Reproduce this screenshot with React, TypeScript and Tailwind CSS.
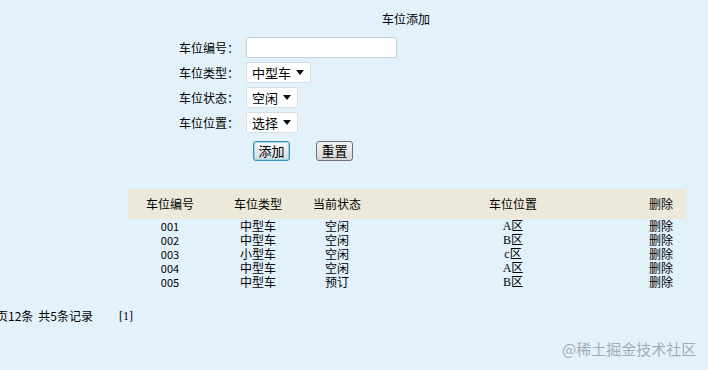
import React from "react"

type Space = { no: string; kind: string; state: string; place: string }

const spaces: Space[] = [
  { no: "001", kind: "中型车", state: "空闲", place: "A区" },
  { no: "002", kind: "中型车", state: "空闲", place: "B区" },
  { no: "003", kind: "小型车", state: "空闲", place: "c区" },
  { no: "004", kind: "中型车", state: "空闲", place: "A区" },
  { no: "005", kind: "中型车", state: "预订", place: "B区" },
]

function FakeSelect({ value, width }: { value: string; width: string }) {
  return (
    <div className={`flex h-[21px] items-center justify-between rounded-[2px] border border-[#d8dde2] bg-white pl-[5px] pr-[6px] text-[13px] text-black ${width}`}>
      <span>{value}</span>
      <svg width="8" height="5" viewBox="0 0 8 5">
        <path d="M0 0h8L4 5z" fill="#111" />
      </svg>
    </div>
  )
}

function Row({ label, children }: { label: string; children: React.ReactNode }) {
  return (
    <div className="flex h-[25px] items-center">
      <span className="w-[67px] text-[12px] text-black">{label}</span>
      {children}
    </div>
  )
}

export default function App() {
  const font = { fontFamily: '"Noto Sans CJK SC", "Liberation Sans", sans-serif' }
  return (
    <div className="relative min-h-[370px] w-[708px] overflow-hidden bg-[#e3f1fb] text-black" style={font}>
      <div className="pl-[382px] pt-[11px] text-[12px] leading-[16px]">车位添加</div>

      <div className="ml-[179px] mt-[8px]">
        <Row label="车位编号：">
          <div className="h-[21px] w-[151px] rounded-[2px] border border-[#c9d0d6] bg-white" />
        </Row>
        <Row label="车位类型：">
          <FakeSelect value="中型车" width="w-[65px]" />
        </Row>
        <Row label="车位状态：">
          <FakeSelect value="空闲" width="w-[52px]" />
        </Row>
        <Row label="车位位置：">
          <FakeSelect value="选择" width="w-[52px]" />
        </Row>
      </div>

      <div className="ml-[253px] mt-[6px] flex gap-[26px]">
        <button className="h-[20px] w-[37px] rounded-[3px] border border-[#3c8fb8] bg-gradient-to-b from-[#f4f8fa] to-[#d3dde2] text-[13px] leading-[16px] shadow-[inset_0_0_0_1px_#9cd3ec]">
          添加
        </button>
        <button className="h-[20px] w-[37px] rounded-[3px] border border-[#707070] bg-gradient-to-b from-[#f4f4f4] to-[#d6d6d6] text-[13px] leading-[16px]">
          重置
        </button>
      </div>

      <div className="ml-[128px] mt-[28px] w-[558px] text-[12px]">
        <div className="grid h-[30px] grid-cols-[84px_92px_66px_266px_50px] items-center bg-[#ede9da] text-center">
          <span>车位编号</span>
          <span>车位类型</span>
          <span>当前状态</span>
          <span className="pl-[20px]">车位位置</span>
          <span>删除</span>
        </div>
        {spaces.map((s) => (
          <div key={s.no} className="grid h-[14px] grid-cols-[84px_92px_66px_266px_50px] items-center text-center leading-[14px]">
            <span className="text-[11px]">{s.no}</span>
            <span>{s.kind}</span>
            <span>{s.state}</span>
            <span className="pl-[20px]" style={{ fontFamily: '"Liberation Serif", "Noto Sans CJK SC", serif' }}>{s.place}</span>
            <span>删除</span>
          </div>
        ))}
      </div>

      <div className="ml-[-16px] mt-[19px] flex text-[12px] leading-[16px]">
        <span>每页12条</span>
        <span className="ml-[5px]">共5条记录</span>
        <span className="ml-[26px]" style={{ fontFamily: '"Liberation Serif", serif' }}>[1]</span>
      </div>

      <div className="absolute left-[562px] top-[340px] text-[15px] leading-[18px] text-[#a3abb3]">@稀土掘金技术社区</div>
    </div>
  )
}
